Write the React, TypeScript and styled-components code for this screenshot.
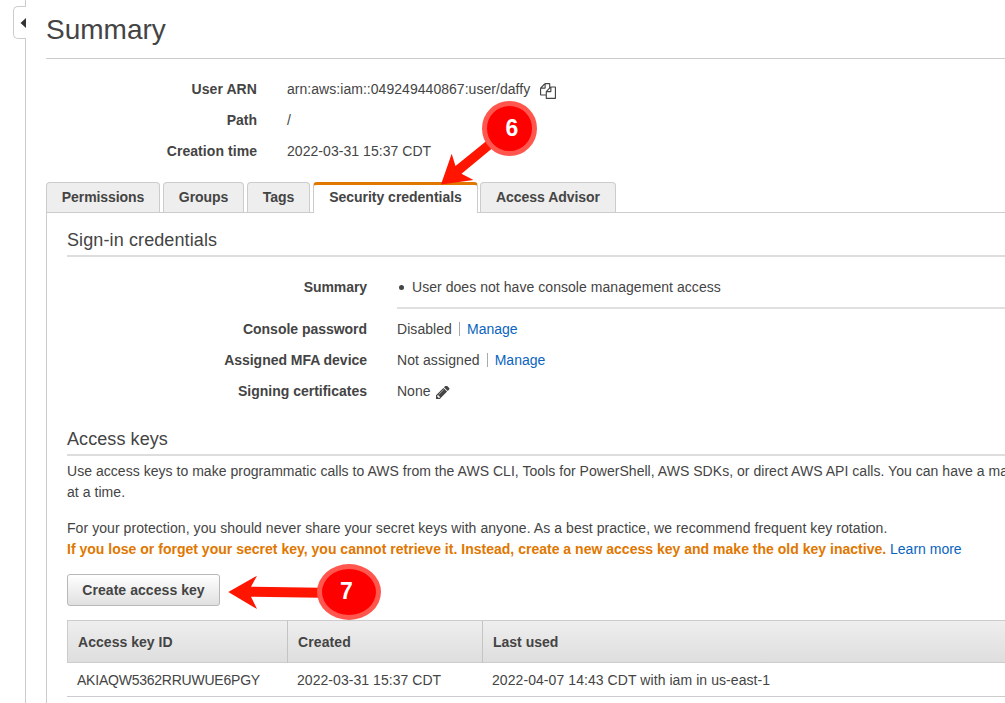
import React from 'react';
import styled, { createGlobalStyle } from 'styled-components';

const GlobalStyle = createGlobalStyle`
  * { box-sizing: border-box; }
  body {
    margin: 0;
    background: #fff;
    color: #444;
    font: 14px/21px "Liberation Sans", Arial, sans-serif;
    overflow: hidden;
  }
`;

const Page = styled.div`
  position: relative;
  display: flex;
  width: 1005px;
  height: 703px;
  overflow: hidden;
`;

const Rail = styled.div`
  flex: none;
  display: flex;
  flex-direction: column;
  align-items: flex-end;
  width: 27px;
`;

const RailLine = styled.div<{ $h?: number }>`
  width: 2px;
  border-left: 1px solid #ccc;
  flex: ${p => (p.$h ? `0 0 ${p.$h}px` : '1')};
`;

const RailToggle = styled.div`
  flex: none;
  display: flex;
  align-items: center;
  justify-content: flex-end;
  width: 13px;
  height: 33px;
  margin-right: 1px;
  border: 1px solid #ccc;
  border-right: 0;
  border-radius: 5px 0 0 5px;
`;

const Main = styled.main`
  flex: none;
  width: 1100px;
  padding-left: 19px;
`;

const Title = styled.h1`
  margin: 0;
  height: 59px;
  padding-top: 12px;
  border-bottom: 1px solid #ccc;
  font-size: 28px;
  line-height: 36px;
  font-weight: 400;
`;

const Text = styled.span<{ $track?: number }>`
  letter-spacing: ${p => p.$track ?? 0}px;
  white-space: nowrap;
`;

const Details = styled.dl<{ $label: number; $top: number }>`
  display: grid;
  grid-template-columns: ${p => p.$label}px 1fr;
  column-gap: 30px;
  margin: 0;
  padding-top: ${p => p.$top}px;
`;

const Label = styled.dt`
  height: 31px;
  line-height: 31px;
  font-weight: 700;
  text-align: right;
`;

const Value = styled.dd`
  display: flex;
  align-items: center;
  height: 31px;
  margin: 0;
`;

const Bullet = styled.i`
  width: 5px;
  height: 5px;
  margin: 0 8px 1px 2px;
  border-radius: 50%;
  background: #444;
`;

const Divider = styled.div`
  grid-column: 2;
  height: 11px;
  padding-top: 4px;
  &::before { content: ''; display: block; border-top: 2px solid #e0e0e0; }
`;

const Pipe = styled.i`
  width: 1px;
  height: 14px;
  margin: 0 7px 1px;
  background: #aaa;
`;

const Link = styled.a`
  color: #0a64c0;
`;

const Tabs = styled.nav`
  display: flex;
  height: 31px;
  margin-top: 15px;
`;

const Tab = styled.div<{ $w: number; $gap: number; $active?: boolean }>`
  position: relative;
  z-index: 1;
  width: ${p => p.$w}px;
  height: ${p => (p.$active ? 31 : 30)}px;
  margin-right: ${p => p.$gap}px;
  border: 1px solid #ccc;
  border-top: ${p => (p.$active ? '3px solid #e07700' : '1px solid #ccc')};
  border-bottom: 0;
  border-radius: 4px 4px 0 0;
  background: ${p => (p.$active ? '#fff' : '#eee')};
  font-weight: 700;
  line-height: ${p => (p.$active ? 24 : 28)}px;
  text-align: center;
`;

const Panel = styled.section`
  margin-top: -1px;
  padding: 15px 0 0 20px;
  height: 600px;
  border: 1px solid #ccc;
`;

const Heading = styled.h2<{ $top?: number }>`
  margin: ${p => p.$top ?? 0}px 0 0;
  height: 29px;
  border-bottom: 2px solid #ddd;
  font-size: 18px;
  line-height: 24px;
  font-weight: 400;
`;

const Para = styled.p<{ $top: number }>`
  margin: ${p => p.$top}px 0 0;
`;

const Warning = styled.strong`
  color: #e07700;
`;

const Button = styled.button`
  display: block;
  width: 153px;
  height: 32px;
  margin: 14px 0;
  padding: 0;
  border: 1px solid #b8b8b8;
  border-radius: 3px;
  background: linear-gradient(#fff, #e0e0e0);
  color: #444;
  font: inherit;
  font-weight: 700;
`;

const Row = styled.div<{ $head?: boolean }>`
  display: grid;
  grid-template-columns: 220px 195px 1fr;
  height: ${p => (p.$head ? 43 : 34)}px;
  line-height: ${p => (p.$head ? 42 : 34)}px;
  font-weight: ${p => (p.$head ? 700 : 400)};
  background: ${p => (p.$head ? 'linear-gradient(#eee, #dedede)' : '#fff')};
  border: solid #ccc;
  border-width: ${p => (p.$head ? '1px 0 1px 1px' : '0 0 1px')};
`;

const Cell = styled.div<{ $head?: boolean }>`
  padding-left: 10px;
  border-right: ${p => (p.$head ? '1px solid #c4c4c4' : '0')};
`;

const Overlay = styled.svg`
  position: absolute;
  inset: 0;
  z-index: 2;
`;

const Badge = styled.div<{ $x: number; $y: number; $w: number; $h: number; $shift: number }>`
  position: absolute;
  z-index: 3;
  left: ${p => p.$x}px;
  top: ${p => p.$y}px;
  width: ${p => p.$w}px;
  height: ${p => p.$h}px;
  padding-left: ${p => Math.max(0, p.$shift)}px;
  padding-right: ${p => Math.max(0, -p.$shift)}px;
  border: 5px solid #ff564d;
  border-radius: 50%;
  background: #f00;
  color: #fff;
  font-size: 23px;
  font-weight: 700;
  line-height: ${p => p.$h - 11}px;
  text-align: center;
`;

const Icon = styled.svg<{ $l: number; $t: number }>`
  display: block;
  flex: none;
  margin: ${p => p.$t}px 0 0 ${p => p.$l}px;
  fill: #444;
`;

const CopyIcon = () => (
  <Icon width="16" height="16" viewBox="0 0 1792 1792" $l={10} $t={2}>
    <path d="M1696 384q40 0 68 28t28 68v1216q0 40-28 68t-68 28h-960q-40 0-68-28t-28-68v-288h-544q-40 0-68-28t-28-68v-672q0-40 20-88t48-76l408-408q28-28 76-48t88-20h416q40 0 68 28t28 68v328q68-40 128-40h416zm-544 213l-299 299h299v-299zm-640-384l-299 299h299v-299zm196 647l316-316v-416h-384v416q0 40-28 68t-68 28h-416v640h512v-256q0-40 20-88t48-76zm956 804v-1152h-384v416q0 40-28 68t-68 28h-416v640h896z" />
  </Icon>
);

const PencilIcon = () => (
  <Icon width="13.5" height="13.5" viewBox="128 256 1515 1408" $l={6} $t={2}>
    <path d="M491 1536l91-91-235-235-91 91v107h128v128h107zm523-928q0-22-22-22-10 0-17 7l-542 542q-7 7-7 17 0 22 22 22 10 0 17-7l542-542q7-7 7-17zm-54-192l416 416-832 832h-416v-416zm683 96q0 53-37 90l-166 166-416-416 166-165q36-38 90-38 53 0 91 38l235 234q37 39 37 91z" />
  </Icon>
);

export default function App() {
  return (
    <Page>
      <GlobalStyle />
      <Rail>
        <RailLine $h={6} />
        <RailToggle>
          <svg width="6" height="10" viewBox="0 0 6 10"><path d="M6 0v10L0.5 5z" fill="#333" /></svg>
        </RailToggle>
        <RailLine />
      </Rail>
      <Main>
        <Title><Text>Summary</Text></Title>
        <Details $label={211} $top={15}>
          <Label><Text $track={0.08}>User ARN</Text></Label>
          <Value><Text $track={0.04}>arn:aws:iam::049249440867:user/daffy</Text><CopyIcon /></Value>
          <Label><Text>Path</Text></Label>
          <Value>/</Value>
          <Label><Text $track={0.06}>Creation time</Text></Label>
          <Value><Text $track={0.05}>2022-03-31 15:37 CDT</Text></Value>
        </Details>
        <Tabs>
          <Tab $w={114} $gap={3}><Text $track={-0.08}>Permissions</Text></Tab>
          <Tab $w={81} $gap={3}><Text $track={-0.08}>Groups</Text></Tab>
          <Tab $w={63} $gap={3}><Text>Tags</Text></Tab>
          <Tab $w={165} $gap={2} $active><Text $track={-0.02}>Security credentials</Text></Tab>
          <Tab $w={136} $gap={0}><Text $track={-0.04}>Access Advisor</Text></Tab>
        </Tabs>
        <Panel>
          <Heading><Text $track={0.11}>Sign-in credentials</Text></Heading>
          <Details $label={300} $top={15}>
            <Label><Text $track={-0.08}>Summary</Text></Label>
            <Value><Bullet /><Text $track={0.05}>User does not have console management access</Text></Value>
            <Divider />
            <Label><Text $track={-0.03}>Console password</Text></Label>
            <Value><Text $track={0.06}>Disabled</Text><Pipe /><Link><Text>Manage</Text></Link></Value>
            <Label><Text $track={-0.03}>Assigned MFA device</Text></Label>
            <Value><Text $track={0.08}>Not assigned</Text><Pipe /><Link><Text>Manage</Text></Link></Value>
            <Label><Text $track={-0.01}>Signing certificates</Text></Label>
            <Value><Text>None</Text><PencilIcon /></Value>
          </Details>
          <Heading $top={20}><Text $track={0.08}>Access keys</Text></Heading>
          <Para $top={5}>
            <Text $track={0.035}>Use access keys to make programmatic calls to AWS from the AWS CLI, Tools for PowerShell, AWS SDKs, or direct AWS API calls. You can have a maximum</Text><br />
            <Text $track={0.05}>at a time.</Text>
          </Para>
          <Para $top={15}>
            <Text $track={0.062}>For your protection, you should never share your secret keys with anyone. As a best practice, we recommend frequent key rotation.</Text><br />
            <Warning><Text $track={0.013}>If you lose or forget your secret key, you cannot retrieve it. Instead, create a new access key and make the old key inactive.</Text></Warning>{' '}
            <Link><Text>Learn more</Text></Link>
          </Para>
          <Button><Text $track={0.06}>Create access key</Text></Button>
          <Row $head>
            <Cell $head><Text $track={0.04}>Access key ID</Text></Cell>
            <Cell $head><Text $track={0.1}>Created</Text></Cell>
            <Cell><Text>Last used</Text></Cell>
          </Row>
          <Row>
            <Cell><Text $track={-0.23}>AKIAQW5362RRUWUE6PGY</Text></Cell>
            <Cell><Text $track={0.05}>2022-03-31 15:37 CDT</Text></Cell>
            <Cell><Text $track={0.07}>2022-04-07 14:43 CDT with iam in us-east-1</Text></Cell>
          </Row>
        </Panel>
      </Main>
      <Overlay width="1005" height="703" fill="#ff1500">
        <path d="M441 184.5 451.7 153.7 455.5 166 487 140.5 492 148.5 461.5 173.7 473.5 180z" />
        <path d="M228.3 592 257 575.7 251 586.7 320 587.7V597.7L251 596.7 257 609z" />
      </Overlay>
      <Badge $x={482} $y={101} $w={55} $h={55} $shift={5}>6</Badge>
      <Badge $x={317} $y={564} $w={64} $h={56} $shift={-5}>7</Badge>
    </Page>
  );
}
